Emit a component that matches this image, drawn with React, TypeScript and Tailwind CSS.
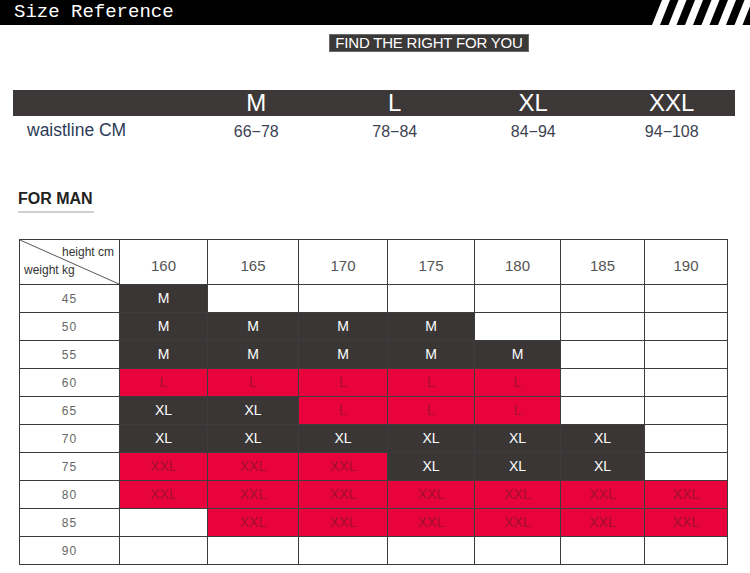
import React from "react";

type Cell = "" | "M" | "L" | "XL" | "XXL";

const heights = ["160", "165", "170", "175", "180", "185", "190"];

const rows: { weight: string; cells: Cell[] }[] = [
  { weight: "45", cells: ["M", "", "", "", "", "", ""] },
  { weight: "50", cells: ["M", "M", "M", "M", "", "", ""] },
  { weight: "55", cells: ["M", "M", "M", "M", "M", "", ""] },
  { weight: "60", cells: ["L", "L", "L", "L", "L", "", ""] },
  { weight: "65", cells: ["XL", "XL", "L", "L", "L", "", ""] },
  { weight: "70", cells: ["XL", "XL", "XL", "XL", "XL", "XL", ""] },
  { weight: "75", cells: ["XXL", "XXL", "XXL", "XL", "XL", "XL", ""] },
  { weight: "80", cells: ["XXL", "XXL", "XXL", "XXL", "XXL", "XXL", "XXL"] },
  { weight: "85", cells: ["", "XXL", "XXL", "XXL", "XXL", "XXL", "XXL"] },
  { weight: "90", cells: ["", "", "", "", "", "", ""] },
];

const sizes = [
  { name: "M", range: "66−78" },
  { name: "L", range: "78−84" },
  { name: "XL", range: "84−94" },
  { name: "XXL", range: "94−108" },
];

function cellClass(c: Cell) {
  if (c === "M" || c === "XL") return "bg-[#3a3636] text-white";
  if (c === "L" || c === "XXL") return "bg-[#e9033c] text-[#a3102f]";
  return "bg-white";
}

function Stripes() {
  const xs = [0, 16.5, 33, 49.5, 66, 82.5];
  return (
    <svg width="100" height="25" viewBox="0 0 100 25" className="block">
      {xs.map((x) => (
        <polygon
          key={x}
          points={`${x + 2},25 ${x + 10},25 ${x + 20},0 ${x + 12},0`}
          fill="#fff"
        />
      ))}
    </svg>
  );
}

export default function App() {
  return (
    <div className="w-[750px] h-[573px] bg-white overflow-hidden font-['Liberation_Sans',Arial,sans-serif]">
      {/* title bar */}
      <div className="h-[25px] bg-black flex items-center justify-between">
        <span className="pl-[14px] text-white text-[19px] leading-none font-['Liberation_Mono',monospace]">
          Size Reference
        </span>
        <Stripes />
      </div>

      <div className="flex justify-center mt-[9px] pl-[108px]">
        <div className="h-[18px] px-[5px] bg-[#3b3838] border border-[#6b6868] text-white text-[15px] leading-[16px] tracking-[-0.2px]">
          FIND THE RIGHT FOR YOU
        </div>
      </div>

      {/* size bar */}
      <div className="mt-[38px] ml-[13px] w-[722px] h-[26px] bg-[#3b3837] overflow-hidden">
        <div className="grid grid-cols-[174px_138.5px_138.5px_138.5px_138.5px] items-end h-full">
          <div />
          {sizes.map((s) => (
            <div key={s.name} className="text-center text-white text-[24px] leading-[26px]">
              {s.name}
            </div>
          ))}
        </div>
      </div>
      <div className="ml-[13px] grid grid-cols-[174px_138.5px_138.5px_138.5px_138.5px] items-center h-[28px]">
        <div className="pl-[14px] text-[17.5px] text-[#2c3c57]">waistline CM</div>
        {sizes.map((s) => (
          <div key={s.name} className="text-center text-[16px] text-[#3c4252] pt-[4px]">
            {s.range}
          </div>
        ))}
      </div>

      {/* FOR MAN */}
      <div className="mt-[46px] ml-[18px] w-[76px]">
        <div className="text-[16px] font-bold text-[#222] leading-[18px]">FOR MAN</div>
        <div className="mt-[3px] h-[2px] bg-[#cfcfcf]" />
      </div>

      {/* chart */}
      <div className="mt-[26px] ml-[19px] w-[709px] bg-[#3c3c3c] p-px grid grid-cols-[99px_87px_90px_88px_86px_85px_83px_82px] gap-px">
        <div className="relative h-[44px] bg-white">
          <svg className="absolute inset-0" width="99" height="44" viewBox="0 0 99 44">
            <line x1="0" y1="0" x2="99" y2="44" stroke="#555" strokeWidth="1" />
          </svg>
          <span className="absolute right-[5px] top-[3px] text-[12px] text-[#333]">height cm</span>
          <span className="absolute left-[4px] bottom-[5px] text-[12px] text-[#333]">weight kg</span>
        </div>
        {heights.map((h) => (
          <div key={h} className="h-[44px] bg-white flex items-center justify-center pt-[9px] text-[15px] text-[#555]">
            {h}
          </div>
        ))}
        {rows.map((r) => (
          <React.Fragment key={r.weight}>
            <div className="h-[27px] bg-white flex items-center justify-center text-[12px] tracking-[1px] text-[#666]">
              {r.weight}
            </div>
            {r.cells.map((c, i) => (
              <div
                key={i}
                className={`h-[27px] flex items-center justify-center text-[14px] ${cellClass(c)}`}
              >
                {c}
              </div>
            ))}
          </React.Fragment>
        ))}
      </div>
    </div>
  );
}
